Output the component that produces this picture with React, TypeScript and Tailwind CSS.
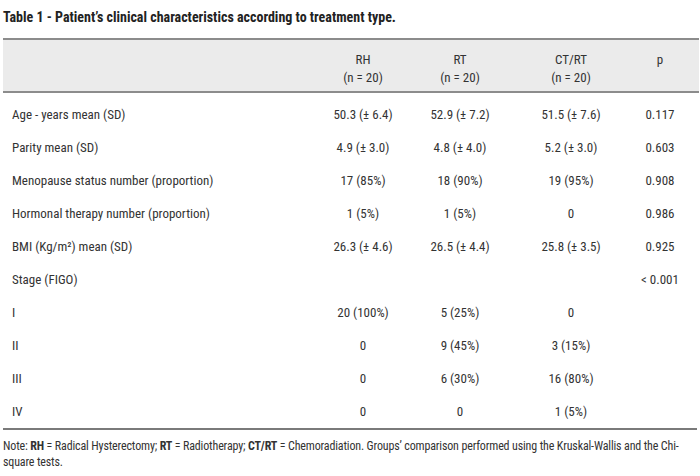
const rows: [string, string, string, string, string][] = [
  ["Age - years mean (SD)", "50.3 (± 6.4)", "52.9 (± 7.2)", "51.5 (± 7.6)", "0.117"],
  ["Parity mean (SD)", "4.9 (± 3.0)", "4.8 (± 4.0)", "5.2 (± 3.0)", "0.603"],
  ["Menopause status number (proportion)", "17 (85%)", "18 (90%)", "19 (95%)", "0.908"],
  ["Hormonal therapy number (proportion)", "1 (5%)", "1 (5%)", "0", "0.986"],
  ["BMI (Kg/m²) mean (SD)", "26.3 (± 4.6)", "26.5 (± 4.4)", "25.8 (± 3.5)", "0.925"],
  ["Stage (FIGO)", "", "", "", "< 0.001"],
  ["I", "20 (100%)", "5 (25%)", "0", ""],
  ["II", "0", "9 (45%)", "3 (15%)", ""],
  ["III", "0", "6 (30%)", "16 (80%)", ""],
  ["IV", "0", "0", "1 (5%)", ""],
];

const cols = "grid grid-cols-[310px_100px_94px_128px_50px_1fr]";

export default function App() {
  return (
    <div className="w-[700px] h-[476px] bg-white text-[#333] text-[13px] overflow-hidden font-['Roboto',sans-serif] [font-stretch:75%]">
      <div className="pl-[3px] pt-[9px] leading-[16px] font-bold text-[#222] text-[14px]">
        Table 1 - Patient’s clinical characteristics according to treatment type.
      </div>

      <div className="ml-[3px] mr-[1px] mt-[13px]">
        {/* Header band */}
        <div className={`${cols} bg-[#ebebeb] border-t-2 border-b-2 border-[#8c8c8c] pt-[11px] pb-[4px] leading-[18px]`}>
          <div />
          <div className="text-center">RH<br />(n = 20)</div>
          <div className="text-center">RT<br />(n = 20)</div>
          <div className="text-center">CT/RT<br />(n = 20)</div>
          <div className="text-center">p</div>
          <div />
        </div>

        {/* Body */}
        <div className="pt-[5px] border-b-2 border-[#7a7a7a] mr-[2px]">
          {rows.map((r) => (
            <div key={r[0]} className={`${cols} h-[33px] items-center`}>
              <div className="pl-[9px]">{r[0]}</div>
              <div className="text-center">{r[1]}</div>
              <div className="text-center">{r[2]}</div>
              <div className="text-center">{r[3]}</div>
              <div className="text-center">{r[4]}</div>
              <div />
            </div>
          ))}
        </div>
      </div>

      <p className="pl-[3px] pr-[2px] mt-[8px] leading-[16px] text-[12px] tracking-[-0.15px]">
        Note: <b>RH</b> = Radical Hysterectomy; <b>RT</b> = Radiotherapy; <b>CT/RT</b> = Chemoradiation. Groups’ comparison performed using the Kruskal-Wallis and the Chi-square tests.
      </p>
    </div>
  );
}
